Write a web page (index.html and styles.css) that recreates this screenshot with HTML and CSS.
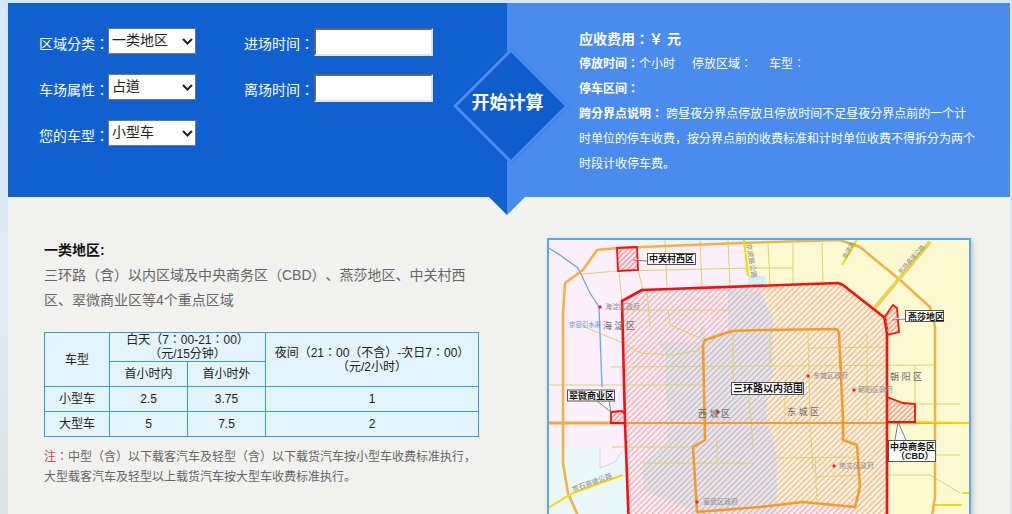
FILE: index.html
```html
<!DOCTYPE html>
<html>
<head>
<meta charset="utf-8">
<title>停车费计算</title>
<link rel="stylesheet" href="styles.css">
</head>
<body>
<div class="page">
  <section class="calc">
    <form class="calc-form">
      <div class="form-col">
        <div class="field"><label class="field-label">区域分类：</label><select class="field-select"><option>一类地区</option></select></div>
        <div class="field"><label class="field-label">车场属性：</label><select class="field-select"><option>占道</option></select></div>
        <div class="field"><label class="field-label">您的车型：</label><select class="field-select"><option>小型车</option></select></div>
      </div>
      <div class="form-col">
        <div class="field"><label class="field-label">进场时间：</label><input class="field-input" type="text"></div>
        <div class="field"><label class="field-label">离场时间：</label><input class="field-input" type="text"></div>
      </div>
    </form>
    <div class="result">
      <p class="result-fee">应收费用：￥ 元</p>
      <p class="result-line"><b>停放时间：</b>个小时<span class="gap-a">停放区域：</span><span class="gap-b">车型：</span></p>
      <p class="result-line"><b>停车区间：</b></p>
      <p class="result-line"><b>跨分界点说明：</b> 跨昼夜分界点停放且停放时间不足昼夜分界点前的一个计时单位的停车收费<span class="sc">，</span>按分界点前的收费标准和计时单位收费不得拆分为两个时段计收停车费<span class="sc">。</span></p>
    </div>
    <div class="start"><span class="start-text">开始计算</span></div>
    <i class="notch notch-left"></i>
    <i class="notch notch-right"></i>
  </section>

  <section class="info">
    <div class="info-text">
      <h3 class="info-title">一类地区:</h3>
      <p class="info-desc">三环路（含）以内区域及中央商务区（CBD）<span class="sc">、</span>燕莎地区<span class="sc">、</span>中关村西区<span class="sc">、</span>翠微商业区等4个重点区域</p>
      <table class="fee-table">
        <colgroup><col class="c1"><col class="c2"><col class="c2"><col class="c3"></colgroup>
        <tr class="r-head"><td rowspan="2">车型</td><td colspan="2">白天（7：00-21：00）<br>（元/15分钟）</td><td rowspan="2">夜间（21：00（不含）-次日7：00）<br>（元/2小时）</td></tr>
        <tr class="r-row"><td>首小时内</td><td>首小时外</td></tr>
        <tr class="r-row"><td>小型车</td><td>2.5</td><td>3.75</td><td>1</td></tr>
        <tr class="r-row"><td>大型车</td><td>5</td><td>7.5</td><td>2</td></tr>
      </table>
      <p class="note"><span class="note-mark">注：</span>中型（含）以下载客汽车及轻型（含）以下载货汽车按小型车收费标准执行<span class="sc">，</span>大型载客汽车及轻型以上载货汽车按大型车收费标准执行<span class="sc">。</span></p>
    </div>
    <div class="map">
      <svg class="map-svg" viewBox="549 240 420 290" width="420" height="290" xmlns="http://www.w3.org/2000/svg">
        <defs>
          <pattern id="hatch" width="4" height="4" patternUnits="userSpaceOnUse" patternTransform="rotate(45)">
            <rect class="hatch-line" x="0" y="0" width="1.2" height="4"/>
          </pattern>
          <pattern id="hatch-s" width="3.6" height="3.6" patternUnits="userSpaceOnUse" patternTransform="rotate(45)">
            <rect class="hatch-line-s" x="0" y="0" width="1.4" height="3.6"/>
          </pattern>
        </defs>
        <rect class="a-pink" x="549" y="240" width="420" height="290"/>
        <polygon class="a-cyan" points="549,447 600,447 600,468 615,460 625,450 630,530 549,530"/>
        <polygon class="a-yellow" points="743,240 969,240 969,530 760,530 760,285 748,285"/>
        <polygon class="a-blue" points="748,276 765,276 768,288 748,288"/>
        <polygon class="a-blue" points="657,342 700,342 700,327 705,325 705,338 728,331 728,290 760,290 770,313 773,313 773,377 767,387 767,423 773,437 777,457 777,530 690,530 690,510 643,490 643,463 668,443 665,353"/>
        <polygon class="a-pink" points="777,505 855,507 860,530 777,530"/>
        <polygon fill="url(#hatch)" points="622,301 642,290 838,283 843,285 885,318 887,330 887,530 629,530 625,423"/>

        <g class="road-minor">
          <path d="M582 274L617 271L753 268L793 268"/>
          <path d="M619 273L622 300M638 270L643 290M665 240L667 287M700 240L702 287M728 240L730 287M768 243L770 285M793 243L793 285M822 243L823 283"/>
          <path d="M625 310L730 310M647 290L650 327M668 310L670 325L700 338M623 343L640 353L673 355L700 350M580 325L623 343"/>
          <path d="M610 367L935 365M548 385L703 385M612 447L693 447M733 330L733 380M749 397L753 447M643 463L753 463M717 440L717 463"/>
          <path d="M808 330L810 423L813 470M808 348L887 347M867 333L867 420M770 330L770 363M785 395L785 420M777 458L857 457M815 477L860 475M815 457L817 502"/>
          <path d="M915 365L915 403M915 404L960 404M935 455L960 455M887 475L930 475L960 493"/>
        </g>

        <path class="river" d="M549 248L560 255L578 268L590 293L599 307L602 387"/>
        <path class="border-dash" d="M600 447L600 468L615 462L622 452"/>

        <path class="ring-outer" d="M578 516L568 493L563 463L563 313L565 283L583 270L597 250L617 248L740 243L840 240L860 247L900 280L930 307L935 327L935 497L932 516"/>
        <path class="road-main" d="M549 423L625 423"/>
        <path class="road-orange" d="M625 423L887 423L970 423"/>
        <path class="road-yellow" d="M915 422L970 423"/>
        <path class="road-yellow-edge" d="M873 310L930 242"/>
        <path class="road-yellow" d="M873 310L930 242M842 265L857 240M548 508L573 493L623 475M962 493L970 493M935 505L962 505M744 240L748 276"/>
        <path class="ring-second" d="M703 345L705 340L720 335L732 331L760 330L837 329L839 333L843 420L843 440L857 445L860 487L855 507L803 502L777 505L760 507L697 512L693 447L705 440Z"/>
        <polygon class="ring-third" points="622,301 642,290 838,283 843,285 885,318 887,330 887,530 629,530 625,423"/>

        <polygon class="zone" fill="url(#hatch-s)" points="617,248 637,247 638,270 618,271"/>
        <polygon class="zone" fill="url(#hatch-s)" points="611,412 622,411 625,414 625,423 611,423"/>
        <polygon class="zone" fill="url(#hatch-s)" points="884,318 893,305 897,308 899,332 887,335"/>
        <polygon class="zone" fill="url(#hatch-s)" points="887,397 903,403 915,404 915,422 887,422"/>

        <g class="leader">
          <path d="M633 260L647 261L650 258"/>
          <path d="M597 401L611 412L609 401"/>
          <path d="M892 320L905 319L907 315"/>
          <path d="M895 440L898 422L906 440"/>
        </g>
        <g class="dots">
          <circle cx="600" cy="307" r="1.7"/><circle cx="718" cy="412" r="1.7"/><circle cx="808" cy="376" r="1.7"/><circle cx="854" cy="390" r="1.7"/><circle cx="834" cy="466" r="1.7"/><circle cx="697" cy="502" r="1.7"/>
        </g>
        <g class="t-small">
          <text x="605" y="309">海淀区政府</text>
          <text x="813" y="378">东城区政府</text>
          <text x="858" y="392">朝阳区政府</text>
          <text x="839" y="468">崇文区政府</text>
          <text x="703" y="504">宣武区政府</text>
          <text transform="translate(573,492) rotate(-20)">京石高速公路</text>
          <text class="t-tight" transform="translate(901,274) rotate(-48)">机场高速公路</text>
          <text class="t-tight" transform="translate(846,259) rotate(-60)">高速路</text>
          <text transform="translate(746,244) rotate(80)">京顺路公路</text>
        </g>
        <text class="t-river" x="569" y="327">京密引水渠</text>
        <g class="t-district">
          <text x="603" y="329">海 淀 区</text>
          <text x="698" y="417">西 城 区</text>
          <text x="787" y="415">东 城 区</text>
          <text x="890" y="380">朝 阳 区</text>
        </g>
        <rect class="lbl-box" x="647.5" y="253.5" width="48" height="11"/>
        <text class="lbl" x="649" y="262">中关村西区</text>
        <rect class="lbl-box" x="567.5" y="390" width="47" height="11"/>
        <text class="lbl" x="569" y="399">翠微商业区</text>
        <rect class="lbl-box" x="731.5" y="382.5" width="72" height="12"/>
        <text class="lbl lbl-big" x="733" y="392">三环路以内范围</text>
        <rect class="lbl-box" x="905.5" y="310.5" width="38" height="11"/>
        <text class="lbl" x="908" y="319.5">燕莎地区</text>
        <rect class="lbl-box" x="888.5" y="440.5" width="47" height="21"/>
        <text class="lbl" x="890" y="450">中央商务区</text>
        <text class="lbl" x="896" y="459">（CBD）</text>
      </svg>
    </div>
  </section>
</div>
</body>
</html>
```

FILE: styles.css
```css
* { box-sizing: border-box; }
html, body { height: 514px; overflow: hidden; }
body {
  margin: 0;
  padding: 3px 2px 0 8px;
  background: linear-gradient(180deg, #d3e9fb 0%, #dfecf5 60%, #dde3e6 100%);
  font-family: "Liberation Sans", "Noto Sans CJK TC", "Noto Sans CJK SC", sans-serif;
  font-size: 14px;
  text-spacing-trim: space-all;
  text-autospace: no-autospace;
}
.page { width: 1002px; height: 511px; background: #f1f1ef; }
p, h3 { margin: 0; }
.sc { font-family: "Liberation Sans", "Noto Sans CJK SC", sans-serif; }

.calc { position: relative; display: flex; height: 194px; color: #fff; }

.calc-form {
  display: flex;
  gap: 48px;
  width: 499px;
  padding: 25px 0 0 31px;
  background: #1160d2;
}
.form-col { display: flex; flex-direction: column; gap: 20px; }
.field { display: flex; align-items: flex-start; height: 26px; }
.field-label { width: 69px; padding-top: 6px; font-size: 14px; line-height: 20px; white-space: nowrap; }
.field-select {
  appearance: none;
  width: 88px;
  height: 26px;
  padding: 0 0 2px 3px;
  background: #fff url("data:image/svg+xml,%3Csvg xmlns='http://www.w3.org/2000/svg' width='11' height='7'%3E%3Cpath d='M1 1l4.5 4.5L10 1' fill='none' stroke='%23222' stroke-width='2'/%3E%3C/svg%3E") no-repeat 73px 9px;
  color: #222;
  border: 1px solid #767676;
  border-radius: 0;
  font-family: inherit;
  font-size: 14px;
}
.field-input {
  width: 119px;
  height: 28px;
  margin-left: 1px;
  background: #fff;
  border-style: solid;
  border-width: 2px;
  border-color: #666 #e2e2e2 #e2e2e2 #666;
  padding: 1px 2px;
}

.result {
  width: 503px;
  padding: 24px 0 0 72px;
  background: #4a8bee;
}
.result-fee { font-size: 14px; font-weight: 700; line-height: 25px; }
.result-line { width: 397px; font-size: 12px; line-height: 25px; }
.gap-a { margin-left: 17px; }
.gap-b { margin-left: 17px; }

.start {
  position: absolute;
  left: 446px;
  top: 46px;
  width: 107px;
  height: 107px;
  display: flex;
  align-items: center;
  justify-content: center;
}
.start::before {
  content: "";
  position: absolute;
  left: 15.5px;
  top: 15.5px;
  width: 76px;
  height: 76px;
  background: #0f5dcd;
  border: 3px solid #4a8bee;
  transform: rotate(45deg);
}
.start-text { position: relative; padding-bottom: 3px; font-size: 18px; font-weight: 700; white-space: nowrap; }

.notch { position: absolute; top: 194px; width: 0; height: 0; border-top: 18px solid; }
.notch-left { left: 481px; border-left: 18px solid transparent; border-top-color: #1160d2; }
.notch-right { left: 499px; border-right: 18px solid transparent; border-top-color: #4a8bee; }

.info { display: flex; padding: 41px 0 0 36px; }
.info-text { width: 434px; }
.info-title { font-size: 14px; font-weight: 700; line-height: 25px; color: #111; }
.info-desc { width: 425px; font-size: 14px; line-height: 25px; color: #666; }

.fee-table {
  width: 434px;
  margin-top: 19px;
  table-layout: fixed;
  border-collapse: collapse;
  background: #e3f4fc;
  color: #222;
  font-size: 12px;
  line-height: 14px;
  text-align: center;
}
.fee-table td { padding: 0; border: 1px solid #3a9ad9; }
.c1 { width: 65px; }
.c2 { width: 78px; }
.c3 { width: 213px; }
.r-head { height: 29px; }
.r-row { height: 25px; }

.note { margin-top: 10px; font-size: 12px; line-height: 20px; color: #666; }
.note-mark { color: #c0504d; }

.map {
  width: 424px;
  height: 294px;
  margin-left: 69px;
  border: 2px solid #5aa9e6;
  box-shadow: 2px 2px 5px rgba(0, 0, 0, .2);
  overflow: hidden;
}
.map-svg { display: block; }

.hatch-line { fill: #f5a3a3; }
.hatch-line-s { fill: #f29090; }
.a-pink { fill: #fdeffb; }
.a-cyan { fill: #e9f9fa; }
.a-yellow { fill: #fdfad3; }
.a-blue { fill: #d4eef6; }

.road-minor path { fill: none; stroke: #d9d270; stroke-width: 1; }
.river { fill: none; stroke: #6da4e8; stroke-width: 1.3; }
.border-dash { fill: none; stroke: #d6d6d6; stroke-width: 1; }
.ring-outer { fill: none; stroke: #f4b043; stroke-width: 2.5; stroke-linejoin: round; }
.road-main { stroke: #f4a93f; stroke-width: 3; }
.road-orange { stroke: #fa9a28; stroke-width: 2.2; }
.road-yellow { fill: none; stroke: #f7d800; stroke-width: 2; }
.road-yellow-edge { stroke: #d8c9c0; stroke-width: 4; }
.ring-second { fill: none; stroke: #f99a25; stroke-width: 2.6; stroke-linejoin: round; }
.ring-third { fill: none; stroke: #f81010; stroke-width: 2.6; stroke-linejoin: round; }
.zone { stroke: #f81010; stroke-width: 1.8; }
.leader path { fill: #fff; stroke: #444; stroke-width: .7; }
.dots circle { fill: #f02030; }

.t-small text { fill: #8a8a8a; font-size: 7px; }
.t-small .t-tight { font-size: 6px; }
.t-river { fill: #5a8fdc; font-size: 6.4px; }
.t-district text { fill: #666; font-size: 9px; }
.lbl-box { fill: #fff; stroke: #555; stroke-width: 1; }
.lbl { fill: #111; font-size: 9px; font-weight: 700; }
.lbl-big { font-size: 10px; }
```
